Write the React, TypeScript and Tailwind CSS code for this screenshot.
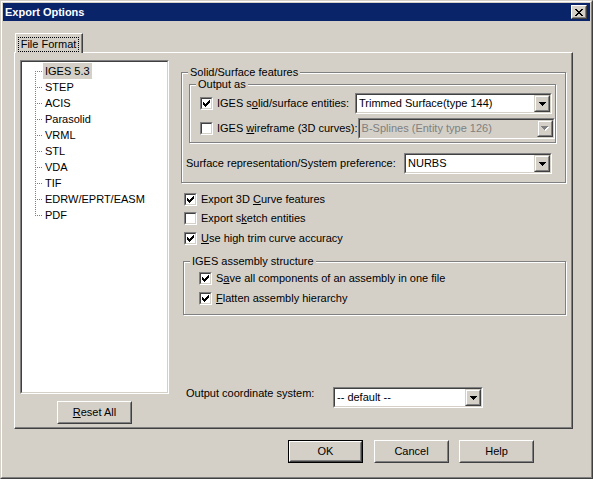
import React from "react";

const FONT = { fontFamily: '"Liberation Sans", Arial, sans-serif' };

function CheckGlyph() {
  return (
    <svg width="7" height="7" viewBox="0 0 7 7" shapeRendering="crispEdges">
      <path
        d="M6 0h1v1H6zM5 1h2v1H5zM0 2h1v1H0zM4 2h3v1H4zM0 3h2v1H0zM3 3h3v1H3zM0 4h5v1H0zM1 5h3v1H1zM2 6h1v1H2z"
        fill="#000"
      />
    </svg>
  );
}

function CheckBox({ checked }: { checked: boolean }) {
  return (
    <div className="w-[13px] h-[13px] shrink-0 border border-t-[#808080] border-l-[#808080] border-r-white border-b-white">
      <div className="w-full h-full border border-t-[#404040] border-l-[#404040] border-r-[#d4d0c8] border-b-[#d4d0c8] bg-white">
        {checked && (
          <div className="ml-px mt-px flex">
            <CheckGlyph />
          </div>
        )}
      </div>
    </div>
  );
}

function Triangle({ disabled }: { disabled?: boolean }) {
  if (disabled) {
    return (
      <svg width="8" height="5" viewBox="0 0 8 5" shapeRendering="crispEdges">
        <path d="M1 1h7v1H1zM2 2h5v1H2zM3 3h3v1H3zM4 4h1v1H4z" fill="#ffffff" />
        <path d="M0 0h7v1H0zM1 1h5v1H1zM2 2h3v1H2zM3 3h1v1H3z" fill="#808080" />
      </svg>
    );
  }
  return (
    <svg width="7" height="4" viewBox="0 0 7 4" shapeRendering="crispEdges">
      <path d="M0 0h7v1H0zM1 1h5v1H1zM2 2h3v1H2zM3 3h1v1H3z" fill="#000" />
    </svg>
  );
}

function Combo({
  className,
  text,
  disabled,
}: {
  className: string;
  text: string;
  disabled?: boolean;
}) {
  return (
    <div
      className={
        "h-[21px] shrink-0 border border-t-[#808080] border-l-[#808080] border-r-white border-b-white " +
        className
      }
    >
      <div
        className={
          "h-full flex border border-t-[#404040] border-l-[#404040] border-r-[#d4d0c8] border-b-[#d4d0c8] " +
          (disabled ? "bg-[#d4d0c8]" : "bg-white")
        }
      >
        <div
          className={
            "flex-1 pl-[2px] flex items-center whitespace-nowrap overflow-hidden leading-none " +
            (disabled ? "text-[#808080]" : "text-black")
          }
        >
          {text}
        </div>
        <div className="w-[16px] h-full shrink-0 border border-t-[#d4d0c8] border-l-[#d4d0c8] border-r-[#404040] border-b-[#404040]">
          <div className="w-full h-full bg-[#d4d0c8] border border-t-white border-l-white border-r-[#808080] border-b-[#808080] flex items-center justify-center">
            <Triangle disabled={disabled} />
          </div>
        </div>
      </div>
    </div>
  );
}

function Button({
  children,
  def,
}: {
  children: React.ReactNode;
  def?: boolean;
}) {
  const inner = (
    <div className="w-full h-full border border-t-white border-l-white border-r-[#404040] border-b-[#404040]">
      <div className="w-full h-full border border-t-[#d4d0c8] border-l-[#d4d0c8] border-r-[#808080] border-b-[#808080] flex items-center justify-center leading-none">
        {children}
      </div>
    </div>
  );
  if (def) {
    return (
      <div className="w-[75px] h-[23px] shrink-0 border border-black">{inner}</div>
    );
  }
  return <div className="w-[75px] h-[23px] shrink-0">{inner}</div>;
}

function GroupLabel({ children }: { children: React.ReactNode }) {
  return (
    <span className="absolute top-[-8px] left-[6px] px-[2px] bg-[#d4d0c8] leading-[14px] whitespace-nowrap">
      {children}
    </span>
  );
}

function TreeLines({ kind }: { kind: "first" | "mid" | "last" }) {
  const rects: React.ReactNode[] = [];
  const yStart = kind === "first" ? 8 : 0;
  const yEnd = kind === "last" ? 8 : 16;
  for (let y = yStart; y <= yEnd; y += 2) {
    if (y < 16) rects.push(<rect key={"v" + y} x={0} y={y} width={1} height={1} fill="#808080" />);
  }
  for (let x = 2; x < 8; x += 2) {
    rects.push(<rect key={"h" + x} x={x} y={8} width={1} height={1} fill="#808080" />);
  }
  return (
    <svg width="8" height="16" viewBox="0 0 8 16" shapeRendering="crispEdges" className="shrink-0">
      {rects}
    </svg>
  );
}

const ITEMS = ["IGES 5.3", "STEP", "ACIS", "Parasolid", "VRML", "STL", "VDA", "TIF", "EDRW/EPRT/EASM", "PDF"];

function CheckRow({
  checked,
  children,
  className,
}: {
  checked: boolean;
  children: React.ReactNode;
  className?: string;
}) {
  return (
    <div className={"flex items-center h-[13px] " + (className || "")}>
      <CheckBox checked={checked} />
      <span className="ml-[4px] whitespace-nowrap leading-none">{children}</span>
    </div>
  );
}

export default function App() {
  return (
    <div
      className="w-[593px] h-[479px] bg-[#d4d0c8] text-[11px] text-black border border-t-[#d4d0c8] border-l-[#d4d0c8] border-r-[#404040] border-b-[#404040]"
      style={FONT}
    >
      <div className="w-full h-full border border-t-white border-l-white border-r-[#808080] border-b-[#808080] p-px flex flex-col">
        {/* Title bar */}
        <div className="h-[18px] shrink-0 bg-[#0a246a] flex items-center pl-[2px] pr-[3px]">
          <span className="text-white font-bold leading-none">Export Options</span>
          <div className="ml-auto w-[16px] h-[14px] border border-t-white border-l-white border-r-[#404040] border-b-[#404040]">
            <div className="w-full h-full bg-[#d4d0c8] border border-t-[#d4d0c8] border-l-[#d4d0c8] border-r-[#808080] border-b-[#808080] flex items-center justify-center">
              <svg width="8" height="7" viewBox="0 0 8 7" shapeRendering="crispEdges">
                <path
                  d="M0 0h2v1H0zM6 0h2v1H6zM1 1h2v1H1zM5 1h2v1H5zM2 2h4v1H2zM3 3h2v1H3zM2 4h4v1H2zM1 5h2v1H1zM5 5h2v1H5zM0 6h2v1H0zM6 6h2v1H6z"
                  fill="#000"
                />
              </svg>
            </div>
          </div>
        </div>

        {/* Tab */}
        <div className="ml-[12px] mt-[12px] w-[68px] h-[20px] -mb-px relative z-10 bg-[#d4d0c8] border-t border-l border-t-white border-l-white border-r border-r-[#404040]">
          <div className="w-full h-full border-r border-r-[#808080] flex items-start justify-center pt-[3px]">
            <span className="border border-dotted border-black px-[2px] leading-[13px] whitespace-nowrap">
              File Format
            </span>
          </div>
        </div>

        {/* Panel */}
        <div className="ml-[11px] w-[559px] h-[377px] shrink-0 border border-t-white border-l-white border-r-[#404040] border-b-[#404040]">
          <div className="w-full h-full border-r border-b border-r-[#808080] border-b-[#808080] flex">
            {/* Left column */}
            <div className="ml-[5px] mt-[7px] w-[149px] flex flex-col items-center shrink-0">
              <div className="w-full h-[334px] border border-t-[#808080] border-l-[#808080] border-r-white border-b-white">
                <div className="w-full h-full bg-white border border-t-[#404040] border-l-[#404040] border-r-[#d4d0c8] border-b-[#d4d0c8] pt-px">
                  {ITEMS.map((it, i) => (
                    <div key={it} className="h-[16px] flex items-center pl-[13px]">
                      <TreeLines kind={i === 0 ? "first" : i === ITEMS.length - 1 ? "last" : "mid"} />
                      <span
                        className={
                          "h-[16px] flex items-center px-[2px] whitespace-nowrap leading-none " +
                          (i === 0 ? "bg-[#d4d0c8]" : "")
                        }
                      >
                        {it}
                      </span>
                    </div>
                  ))}
                </div>
              </div>
              <div className="mt-[7px]">
                <Button>
                  <span>
                    <span className="underline">R</span>eset All
                  </span>
                </Button>
              </div>
            </div>

            {/* Right column */}
            <div className="ml-[12px] mt-[19px] flex flex-col shrink-0">
              {/* Solid/Surface features */}
              <div className="relative w-[385px] h-[111px] border border-[#808080] shadow-[inset_1px_1px_0_#fff,1px_1px_0_#fff] flex flex-col">
                <GroupLabel>Solid/Surface features</GroupLabel>
                <div className="relative ml-[7px] mt-[11px] w-[367px] h-[59px] border border-[#808080] shadow-[inset_1px_1px_0_#fff,1px_1px_0_#fff] pt-[8px] pl-[10px] pr-[3px] flex flex-col gap-[4px]">
                  <GroupLabel>Output as</GroupLabel>
                  <div className="flex items-center h-[21px]">
                    <CheckBox checked />
                    <span className="ml-[4px] flex-1 whitespace-nowrap leading-none">
                      IGES s<span className="underline">o</span>lid/surface entities:
                    </span>
                    <Combo className="w-[197px]" text="Trimmed Surface(type 144)" />
                  </div>
                  <div className="flex items-center h-[21px]">
                    <CheckBox checked={false} />
                    <span className="ml-[4px] flex-1 whitespace-nowrap leading-none">
                      IGES <span className="underline">w</span>ireframe (3D curves):
                    </span>
                    <Combo className="w-[197px]" text="B-Splines (Entity type 126)" disabled />
                  </div>
                </div>
                <div className="mt-[10px] flex items-center h-[21px] pl-[4px] pr-[13px]">
                  <span className="flex-1 whitespace-nowrap leading-none">
                    Surface representation/System preference:
                  </span>
                  <Combo className="w-[148px]" text="NURBS" />
                </div>
              </div>

              {/* Checkboxes */}
              <div className="pl-[3px] flex flex-col">
                <CheckRow checked className="mt-[10px]">
                  Export 3D <span className="underline">C</span>urve features
                </CheckRow>
                <CheckRow checked={false} className="mt-[6px]">
                  Export s<span className="underline">k</span>etch entities
                </CheckRow>
                <CheckRow checked className="mt-[7px]">
                  <span className="underline">U</span>se high trim curve accuracy
                </CheckRow>
              </div>

              {/* IGES assembly structure */}
              <div className="relative ml-[2px] mt-[16px] w-[383px] h-[54px] border border-[#808080] shadow-[inset_1px_1px_0_#fff,1px_1px_0_#fff] pl-[15px] pt-[10px] flex flex-col">
                <GroupLabel>IGES assembly structure</GroupLabel>
                <CheckRow checked>
                  S<span className="underline">a</span>ve all components of an assembly in one file
                </CheckRow>
                <CheckRow checked className="mt-[7px]">
                  <span className="underline">F</span>latten assembly hierarchy
                </CheckRow>
              </div>

              {/* Output coordinate system */}
              <div className="mt-[72px] flex items-start h-[21px] pl-[5px]">
                <span className="w-[147px] whitespace-nowrap leading-[12px]">Output coordinate system:</span>
                <Combo className="w-[150px]" text="-- default --" />
              </div>
            </div>
          </div>
        </div>

        {/* Buttons */}
        <div className="mt-[11px] ml-[285px] flex">
          <Button def>OK</Button>
          <div className="ml-[11px]">
            <Button>Cancel</Button>
          </div>
          <div className="ml-[10px]">
            <Button>Help</Button>
          </div>
        </div>
      </div>
    </div>
  );
}
